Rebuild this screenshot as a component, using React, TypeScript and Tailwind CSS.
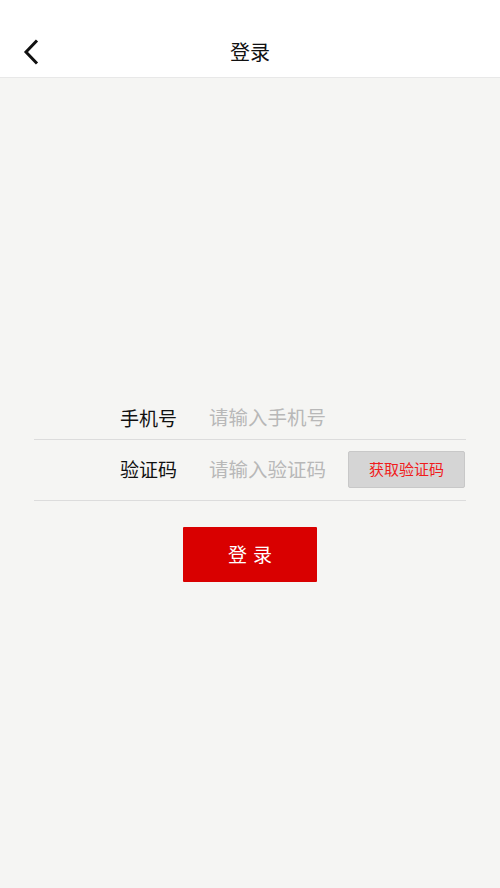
import React from "react";

export default function App() {
  const font = { fontFamily: '"Noto Sans CJK SC", "Noto Sans", sans-serif' };
  return (
    <div className="w-[500px] h-[888px] bg-[#f5f5f3] flex flex-col" style={font}>
      <header className="h-[78px] bg-white border-b border-[#e8e8e8] relative flex items-end justify-center pb-[11px] shrink-0">
        <button className="absolute left-[20px] top-[38px] w-[22px] h-[28px] flex items-center justify-center">
          <svg width="18" height="28" viewBox="0 0 18 28" fill="none">
            <path d="M15 2.5 L4 14 L15 25.5" stroke="#111" strokeWidth="3" strokeLinecap="butt" strokeLinejoin="miter" />
          </svg>
        </button>
        <h1 className="text-[20px] leading-[28px] text-[#111]">登录</h1>
      </header>
      <main className="flex-1 pt-[321px]">
        <div className="mx-[34px]">
          <div className="flex items-center h-[41px] border-b border-[#dcdcdc]">
            <span className="w-[143px] mb-[4px] text-right text-[19px] text-[#111] leading-none">手机号</span>
            <span className="ml-[32px] mb-[4px] text-[19.5px] text-[#b8b8b8] leading-none">请输入手机号</span>
          </div>
          <div className="flex items-center h-[61px] border-b border-[#dcdcdc]">
            <span className="w-[143px] mb-[3px] text-right text-[19px] text-[#111] leading-none">验证码</span>
            <span className="ml-[32px] mb-[3px] text-[19.5px] text-[#b8b8b8] leading-none">请输入验证码</span>
            <button className="ml-auto mr-[1px] mb-[1px] w-[117px] h-[37px] bg-[#d5d5d5] border border-[#c8c8c8] rounded-[2px] text-[15px] text-[#f01c1c]">
              获取验证码
            </button>
          </div>
        </div>
        <div className="flex justify-center mt-[26px]">
          <button className="w-[134px] h-[55px] bg-[#d90000] text-white text-[19px] tracking-[6px] pl-[6px] rounded-[1px]">
            登录
          </button>
        </div>
      </main>
    </div>
  );
}
